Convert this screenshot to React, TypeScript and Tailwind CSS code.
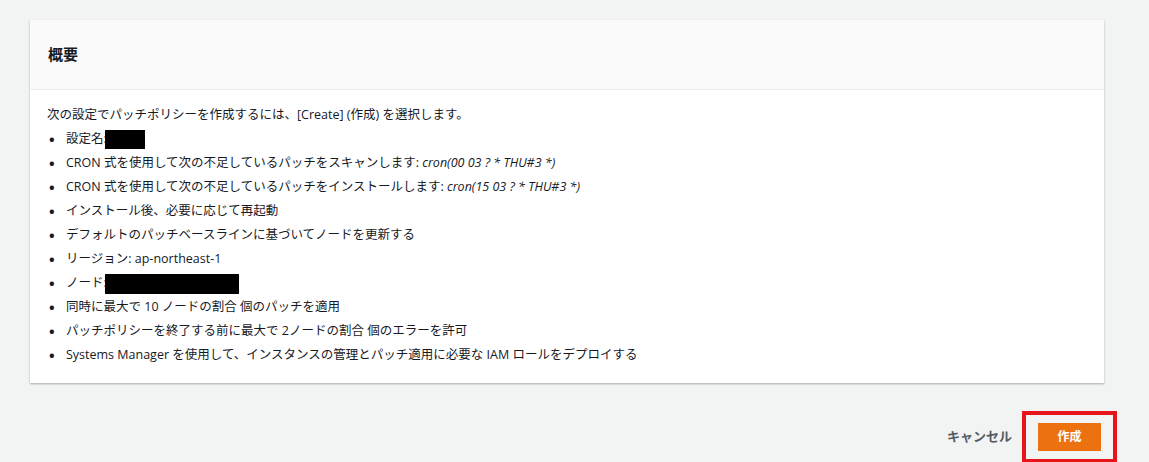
export default function App() {
  const items: React.ReactNode[] = [
    <>設定名:<span className="inline-block w-[40px] h-[19px] bg-black align-middle -ml-[2px]" /></>,
    <>CRON 式を使用して次の不足しているパッチをスキャンします: <i>cron(00 03 ? * THU#3 *)</i></>,
    <>CRON 式を使用して次の不足しているパッチをインストールします: <i>cron(15 03 ? * THU#3 *)</i></>,
    <>インストール後、必要に応じて再起動</>,
    <>デフォルトのパッチベースラインに基づいてノードを更新する</>,
    <>リージョン: ap-northeast-1</>,
    <>ノード:<span className="inline-block w-[134px] h-[20px] bg-black align-middle -ml-[2px]" /></>,
    <>同時に最大で 10 ノードの割合 個のパッチを適用</>,
    <>パッチポリシーを終了する前に最大で 2ノードの割合 個のエラーを許可</>,
    <>Systems Manager を使用して、インスタンスの管理とパッチ適用に必要な IAM ロールをデプロイする</>,
  ];
  return (
    <div
      className="w-[1149px] h-[462px] bg-[#f2f3f3] pt-[20px] text-[#16191f]"
      style={{ fontFamily: '"Open Sans", "Noto Sans CJK JP", sans-serif' }}
    >
      <div className="ml-[30px] w-[1074px] h-[363px] bg-white shadow-[0_1px_2px_rgba(0,0,0,0.3)]">
        <div className="h-[70px] bg-[#fafafa] border-b border-[#eaeded] flex items-center pl-[18px]">
          <h2 className="text-[15px] font-bold">概要</h2>
        </div>
        <div className="pl-[17px] pt-[13px] text-[12.5px]">
          <p className="leading-[24px]">次の設定でパッチポリシーを作成するには、[Create] (作成) を選択します。</p>
          <ul>
            {items.map((it, i) => (
              <li key={i} className="leading-[24px] flex">
                <span className="w-[19px] pl-[2px] text-[15px] font-bold">•</span>
                <span>{it}</span>
              </li>
            ))}
          </ul>
        </div>
      </div>
      <div className="flex justify-end items-center mt-[28px] pr-[32px]">
        <span className="text-[13px] font-bold text-[#545b64] mr-[10px]">キャンセル</span>
        <div className="border-[4px] border-[#e8141c] px-[12px] py-[8px]">
          <div className="w-[63px] h-[28px] bg-[#ec7211] text-white text-[12px] font-bold flex items-center justify-center">
            作成
          </div>
        </div>
      </div>
    </div>
  );
}
